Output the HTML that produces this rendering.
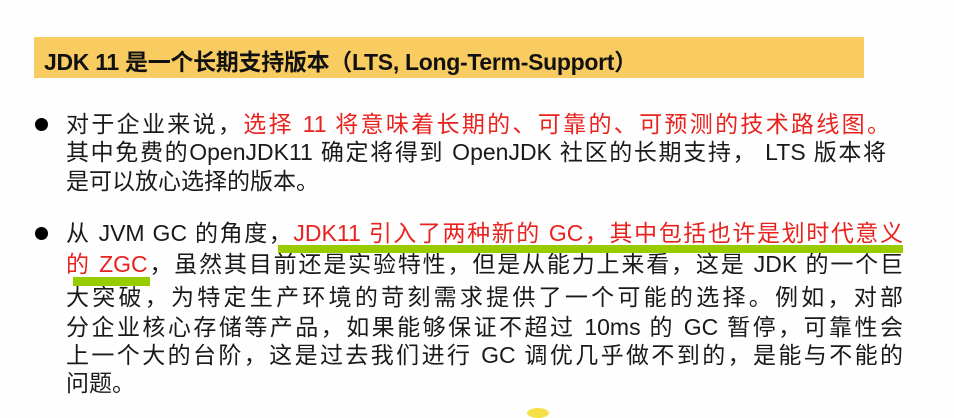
<!DOCTYPE html>
<html><head><meta charset="utf-8"><style>
body{margin:0;width:954px;height:413px;background:#fefefe;position:relative;overflow:hidden;font-family:"Liberation Sans","Noto Sans CJK SC",sans-serif;}
.bar{position:absolute;left:34px;top:37px;width:830px;height:41px;background:#f9cc62;}
.title{position:absolute;left:44px;top:43px;font-size:23px;font-weight:bold;color:#111;white-space:nowrap;letter-spacing:-0.3px;}
.l{position:absolute;left:66px;width:837px;font-size:23px;color:#1a1a1a;white-space:nowrap;text-align:justify;text-align-last:justify;line-height:28px;}
.nj{text-align-last:left;}
.r{color:#e8231e;}
.dot{position:absolute;left:35px;width:13px;height:13px;border-radius:50%;background:#000;}
.g{position:absolute;background:#99cc00;}
</style></head><body>
<div class="bar"></div>
<div class="title">JDK 11 是一个长期支持版本（LTS, Long-Term-Support）</div>
<div class="dot" style="top:118px"></div>
<div class="l" style="top:110px;width:824px">对于企业来说，<span class="r">选择 11 将意味着长期的、可靠的、可预测的技术路线图。</span></div>
<div class="l" style="top:138px;width:820px">其中免费的OpenJDK11 确定将得到 OpenJDK 社区的长期支持， LTS 版本将</div>
<div class="l nj" style="top:167px">是可以放心选择的版本。</div>
<div class="dot" style="top:227px"></div>
<div class="l" style="top:219px">从 JVM GC 的角度，<span class="r">JDK11 引入了两种新的 GC，其中包括也许是划时代意义</span></div>
<div class="l" style="top:250px"><span class="r">的 ZGC</span>，虽然其目前还是实验特性，但是从能力上来看，这是 JDK 的一个巨</div>
<div class="l" style="top:283px">大突破，为特定生产环境的苛刻需求提供了一个可能的选择。例如，对部</div>
<div class="l" style="top:313px">分企业核心存储等产品，如果能够保证不超过 10ms 的 GC 暂停，可靠性会</div>
<div class="l" style="top:341px">上一个大的台阶，这是过去我们进行 GC 调优几乎做不到的，是能与不能的</div>
<div class="l nj" style="top:369px">问题。</div>
<div class="g" style="left:278px;top:245px;width:625px;height:8px"></div>
<div class="g" style="left:73px;top:277px;width:77px;height:9px"></div>
<div style="position:absolute;left:527px;top:408px;width:22px;height:10px;border-radius:50%;background:#f6e04a"></div>
</body></html>
